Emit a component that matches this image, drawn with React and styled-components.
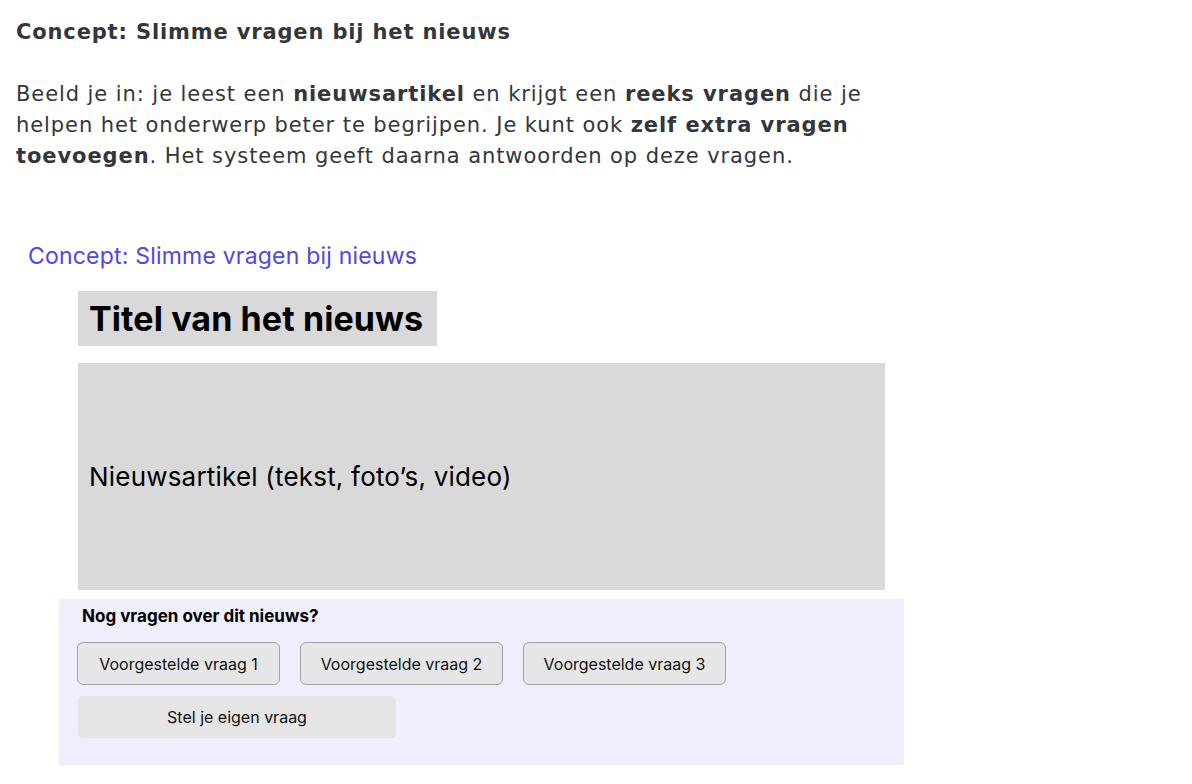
import React from "react";
import styled, { createGlobalStyle } from "styled-components";

const Global = createGlobalStyle`
  html, body { margin: 0; padding: 0; background: #ffffff; }
  body { font-family: "DejaVu Sans", Verdana, sans-serif; }
`;

const Page = styled.div`
  padding: 17px 16px 0 16px;
  width: 1192px;
  box-sizing: border-box;
`;

const Heading = styled.h1`
  margin: 0 0 31px 0;
  font-size: 21px;
  line-height: 31px;
  font-weight: 700;
  letter-spacing: 0.85px;
  color: #33363b;
`;

const Intro = styled.p`
  margin: 0;
  width: 870px;
  font-size: 21px;
  line-height: 31px;
  letter-spacing: 0.92px;
  color: #33363b;
  b { font-weight: 700; }
`;

const Mockup = styled.section`
  margin-top: 69px;
  font-family: Inter, "Noto Sans", sans-serif;
  display: flex;
  flex-direction: column;
`;

const MockTitle = styled.div`
  margin-left: 12px;
  font-size: 23px;
  line-height: 30px;
  color: #5146e6;
  letter-spacing: 0.2px;
`;

const Article = styled.div`
  margin: 20px 0 0 62px;
  display: flex;
  flex-direction: column;
  gap: 17px;
`;

const Block = styled.div`
  background: #d9d9d9;
  color: #000;
  display: flex;
  align-items: center;
  padding-left: 11px;
  box-sizing: border-box;
  width: ${(p) => p.$w}px;
  height: ${(p) => p.$h}px;
  font-size: ${(p) => p.$size}px;
  font-weight: ${(p) => p.$weight};
  letter-spacing: ${(p) => p.$ls}px;
`;

const Panel = styled.div`
  margin: 9px 0 0 43px;
  width: 845px;
  height: 166px;
  box-sizing: border-box;
  background: #efeefc;
  padding: 6px 0 0 18px;
  display: flex;
  flex-direction: column;
`;

const PanelHeading = styled.div`
  margin-left: 5px;
  font-size: 17px;
  line-height: 22px;
  font-weight: 700;
  color: #000;
  letter-spacing: 0px;
`;

const Row = styled.div`
  margin-top: 15px;
  display: flex;
  gap: 20px;
`;

const Suggest = styled.button`
  width: 203px;
  height: 43px;
  box-sizing: border-box;
  background: #e6e6e6;
  border: 1.5px solid #a3a3a3;
  border-radius: 6px;
  font-family: inherit;
  font-size: 16px;
  color: #111;
  padding: 0;
`;

const Own = styled.button`
  margin: 11px 0 0 1px;
  width: 318px;
  height: 42px;
  background: #e5e5e5;
  border: none;
  border-radius: 5px;
  font-family: inherit;
  font-size: 16px;
  color: #111;
  padding: 0;
`;

export default function App() {
  return (
    <>
      <Global />
      <Page>
        <Heading>Concept: Slimme vragen bij het nieuws</Heading>
        <Intro>
          Beeld je in: je leest een <b>nieuwsartikel</b> en krijgt een{" "}
          <b>reeks vragen</b> die je helpen het onderwerp beter te begrijpen. Je
          kunt ook <b>zelf extra vragen toevoegen</b>. Het systeem geeft daarna
          antwoorden op deze vragen.
        </Intro>
        <Mockup>
          <MockTitle>Concept: Slimme vragen bij nieuws</MockTitle>
          <Article>
            <Block $w={359} $h={55} $size={34} $weight={700} $ls={0.1}>
              Titel van het nieuws
            </Block>
            <Block $w={807} $h={227} $size={26} $weight={400} $ls={0.2}>
              Nieuwsartikel (tekst, foto’s, video)
            </Block>
          </Article>
          <Panel>
            <PanelHeading>Nog vragen over dit nieuws?</PanelHeading>
            <Row>
              <Suggest>Voorgestelde vraag 1</Suggest>
              <Suggest>Voorgestelde vraag 2</Suggest>
              <Suggest>Voorgestelde vraag 3</Suggest>
            </Row>
            <Own>Stel je eigen vraag</Own>
          </Panel>
        </Mockup>
      </Page>
    </>
  );
}
